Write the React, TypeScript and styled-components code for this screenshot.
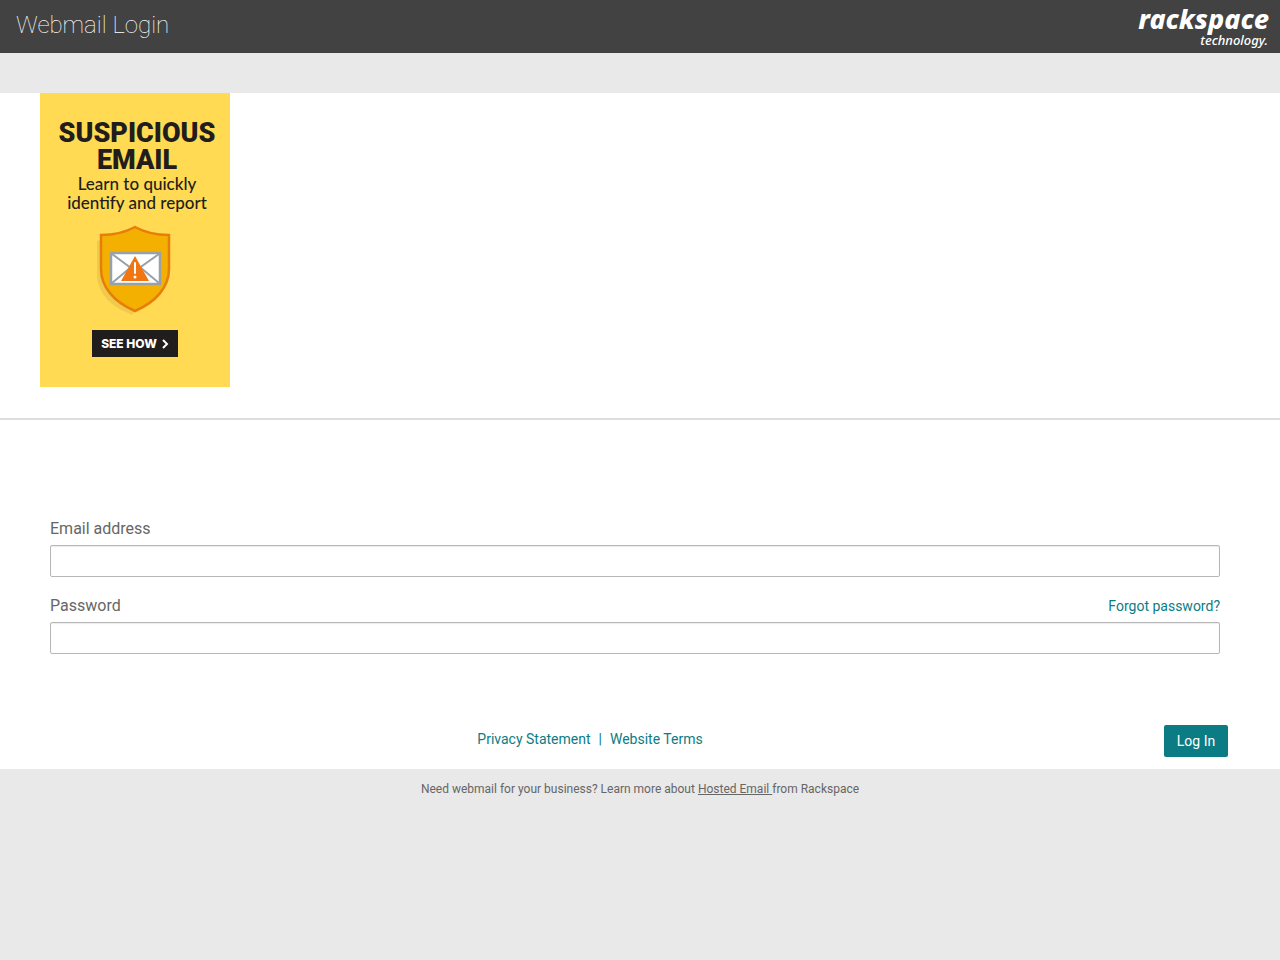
import React from "react";
import styled, { createGlobalStyle } from "styled-components";

const GlobalStyle = createGlobalStyle`
  *, *::before, *::after { box-sizing: border-box; }
  html { background: #e9e9e9; }
  body {
    margin: 0;
    background: #e9e9e9;
    color: #666;
    font-family: Roboto, "Liberation Sans", sans-serif;
    font-size: 14px;
    line-height: 20px;
  }
`;

const Header = styled.header`
  display: flex;
  justify-content: space-between;
  align-items: flex-start;
  height: 53px;
  padding: 5px 11px 0 16px;
  background: #424242;
  color: #fff;
`;

const Title = styled.h1`
  margin: 0;
  font-size: 24px;
  font-weight: 100;
  line-height: 40px;
`;

const Logo = styled.div`
  display: flex;
  flex-direction: column;
  align-items: flex-end;
  font-family: "Noto Sans", "Open Sans", sans-serif;
  font-style: italic;
`;

const LogoName = styled.span`
  font-size: 27px;
  font-weight: 800;
  line-height: 28px;
`;

const LogoTag = styled.span`
  padding-right: 1px;
  font-size: 13px;
  font-weight: 500;
  line-height: 14px;
`;

const Panel = styled.main`
  margin-top: 40px;
  background: #fff;
`;

const BannerArea = styled.section`
  padding: 0 40px 31px;
  border-bottom: 2px solid #ddd;
`;

const Banner = styled.a`
  display: flex;
  flex-direction: column;
  align-items: center;
  width: 190px;
  height: 294px;
  padding: 27px 0 0 4px;
  background: #ffda52;
  color: #221d1d;
  text-align: center;
  text-decoration: none;
`;

const BannerTitle = styled.strong`
  font-family: Roboto, sans-serif;
  font-size: 27px;
  font-weight: 900;
  line-height: 27px;
`;

const BannerText = styled.span`
  font-family: Lato, sans-serif;
  font-size: 17px;
  font-weight: 500;
  line-height: 19px;
  white-space: nowrap;
`;

const ShieldArt = styled.svg`
  display: block;
  margin: 12px 4px 12px 0;
`;

const SeeHow = styled.span`
  display: flex;
  align-items: center;
  justify-content: center;
  gap: 4px;
  width: 86px;
  height: 27px;
  margin-right: 4px;
  background: #221d1d;
  color: #fff;
  font-family: Inter, sans-serif;
  font-size: 12px;
  font-weight: 800;
`;

const Form = styled.form`
  padding-top: 99px;
`;

const Fields = styled.div`
  padding: 0 60px 0 50px;
`;

const Field = styled.div`
  margin-bottom: 19px;
`;

const LabelRow = styled.div`
  display: flex;
  justify-content: space-between;
  align-items: center;
  height: 20px;
  margin-bottom: 6px;
`;

const Label = styled.label`
  font-size: 16px;
`;

const Input = styled.input`
  display: block;
  width: 100%;
  height: 32px;
  padding: 4px 8px;
  border: 1px solid #b7b7b7;
  border-radius: 2px;
  background: #fff;
  box-shadow: inset 0 1px 1px rgba(0, 0, 0, 0.08);
  font: inherit;
`;

const Link = styled.a`
  color: #0c7c84;
  text-decoration: none;
`;

const Actions = styled.div`
  display: grid;
  grid-template-columns: 1fr 64px;
  align-items: center;
  padding: 52px 52px 12px 16px;
`;

const Legal = styled.nav`
  display: flex;
  justify-content: center;
  gap: 8px;
  padding-bottom: 4px;
  color: #0c7c84;
`;

const LoginButton = styled.button`
  height: 32px;
  padding: 0;
  border: 0;
  border-radius: 2px;
  background: #0c7c84;
  color: #fff;
  font: inherit;
`;

const Footer = styled.footer`
  padding: 10px 0;
  font-size: 12px;
  text-align: center;
`;

const FooterLink = styled.a`
  color: inherit;
`;

function Shield() {
  return (
    <ShieldArt width="78" height="94" viewBox="0 0 78 94" aria-hidden="true">
      <path d="M1 17 35 8V90C14 83 1 68 1 50Z" fill="#efca4c" />
      <path d="M35 91 62 72 30 84Z" fill="#efca4c" />
      <path
        d="M39 3C50 9 60 11 73 11V45C73 63 60 78 39 87C18 78 5 63 5 45V11C18 11 28 9 39 3Z"
        fill="#f3b000"
        stroke="#e77e0b"
        strokeWidth="2.5"
      />
      <path d="M15 29H64V60H15Z" fill="#fff" stroke="#98a1a8" strokeWidth="2.5" />
      <path d="M16 30 39 47 63 30M16 59 34 44M63 59 45 44" fill="none" stroke="#98a1a8" strokeWidth="2" />
      <path d="M39 32 53 57H25Z" fill="#ef7612" />
      <path d="M39 39V49" stroke="#fff" strokeWidth="2" strokeLinecap="round" />
      <circle cx="39" cy="53" r="1.5" fill="#fff" />
    </ShieldArt>
  );
}

export default function App() {
  return (
    <>
      <GlobalStyle />
      <Header>
        <Title>Webmail Login</Title>
        <Logo>
          <LogoName>rackspace</LogoName>
          <LogoTag>technology.</LogoTag>
        </Logo>
      </Header>
      <Panel>
        <BannerArea>
          <Banner href="#see-how">
            <BannerTitle>
              SUSPICIOUS
              <br />
              EMAIL
            </BannerTitle>
            <BannerText>
              Learn to quickly
              <br />
              identify and report
            </BannerText>
            <Shield />
            <SeeHow>
              SEE HOW
              <svg width="8" height="10" viewBox="0 0 8 10" aria-hidden="true">
                <path d="M2 1 6 5 2 9" fill="none" stroke="#fff" strokeWidth="2" />
              </svg>
            </SeeHow>
          </Banner>
        </BannerArea>
        <Form onSubmit={(event) => event.preventDefault()}>
          <Fields>
            <Field>
              <LabelRow>
                <Label htmlFor="email">Email address</Label>
              </LabelRow>
              <Input id="email" type="email" />
            </Field>
            <Field>
              <LabelRow>
                <Label htmlFor="password">Password</Label>
                <Link href="#forgot">Forgot password?</Link>
              </LabelRow>
              <Input id="password" type="password" />
            </Field>
          </Fields>
          <Actions>
            <Legal>
              <Link href="#privacy">Privacy Statement</Link>
              <span>|</span>
              <Link href="#terms">Website Terms</Link>
            </Legal>
            <LoginButton type="submit">Log In</LoginButton>
          </Actions>
        </Form>
      </Panel>
      <Footer>
        Need webmail for your business? Learn more about <FooterLink href="#hosted">Hosted Email </FooterLink>
        from Rackspace
      </Footer>
    </>
  );
}
